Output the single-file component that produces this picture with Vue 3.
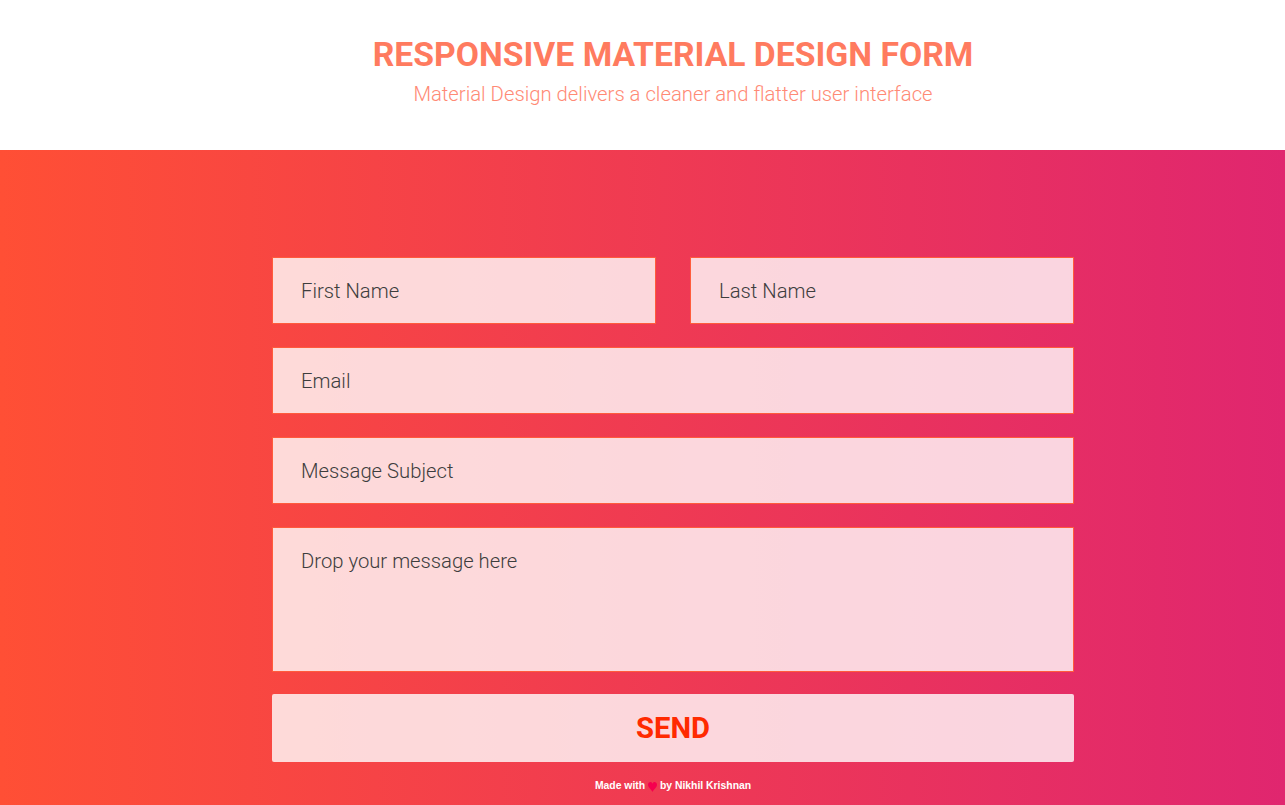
<script setup>
const rows = [
  [{ p: 'First Name' }, { p: 'Last Name' }],
  [{ p: 'Email' }],
  [{ p: 'Message Subject' }],
]
</script>

<template>
  <div class="page">
    <header class="head">
      <h1 class="title">Responsive Material Design Form</h1>
      <p class="sub">Material Design delivers a cleaner and flatter user interface</p>
    </header>
    <main class="band">
      <form class="form" @submit.prevent>
        <div v-for="(row, i) in rows" :key="i" class="row">
          <input v-for="f in row" :key="f.p" class="field" type="text" :placeholder="f.p" />
        </div>
        <textarea class="field area" placeholder="Drop your message here"></textarea>
        <button class="send" type="submit">SEND</button>
      </form>
      <p class="foot">
        Made with
        <svg class="heart" viewBox="0 0 24 24" width="9" height="10" preserveAspectRatio="none" aria-hidden="true">
          <path d="M12 24 C9 18 0 13 0 6.5 C0 2.5 3 0 6.5 0 C9 0 11 1.5 12 4 C13 1.5 15 0 17.5 0 C21 0 24 2.5 24 6.5 C24 13 15 18 12 24 Z" fill="#f5004f" />
        </svg>
        by Nikhil Krishnan
      </p>
    </main>
  </div>
</template>

<style>
html, body { margin: 0; overflow: hidden; }
</style>

<style scoped>
.page {
  width: 1285px;
  height: 805px;
  display: flex;
  flex-direction: column;
  font-family: Roboto, sans-serif;
  overflow: hidden;
}
.head {
  height: 150px;
  flex: none;
  box-sizing: border-box;
  padding: 35px 0 0 61px;
  text-align: center;
  background: #fff;
}
.title {
  margin: 0;
  font-size: 33.7px;
  line-height: 39px;
  font-weight: 700;
  text-transform: uppercase;
  color: #ff7b5f;
}
.sub {
  margin: 8px 0 0;
  font-size: 20.3px;
  line-height: 24px;
  font-weight: 300;
  color: #ff8a75;
}
.band {
  flex: 1;
  box-sizing: border-box;
  padding: 107px 211px 0 272px;
  background: linear-gradient(to right, #ff4f35, #e0266f);
}
.form {
  width: 802px;
  display: flex;
  flex-direction: column;
  gap: 23px;
}
.row {
  display: flex;
  gap: 34px;
}
.field {
  flex: 1;
  min-width: 0;
  height: 67px;
  box-sizing: border-box;
  padding: 0 28px;
  border: 1px solid #ff5b3c;
  border-radius: 0;
  outline: none;
  background: rgba(255, 255, 255, 0.8);
  font-family: Roboto, sans-serif;
  font-size: 20.25px;
  font-weight: 300;
  color: #333;
}
.field::placeholder {
  color: #3d3d3d;
  opacity: 1;
}
.area {
  display: block;
  height: 145px;
  flex: none;
  width: 802px;
  padding: 20px 28px;
  line-height: 26px;
  resize: none;
}
.send {
  height: 68px;
  margin-top: -1px;
  border: none;
  border-radius: 2px;
  background: rgba(255, 255, 255, 0.8);
  font-family: Roboto, sans-serif;
  font-size: 29.2px;
  font-weight: 700;
  color: #ff2a00;
  padding: 0;
}
.foot {
  margin: 17px 0 0 0;
  width: 802px;
  text-align: center;
  font-family: "Liberation Sans", Arial, sans-serif;
  font-size: 10.4px;
  line-height: 14px;
  font-weight: 700;
  color: #fff;
}
.heart {
  vertical-align: -3px;
}
</style>
